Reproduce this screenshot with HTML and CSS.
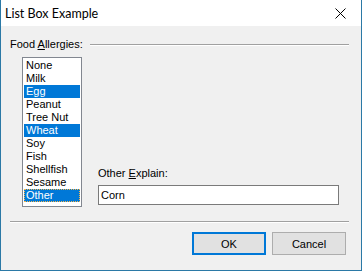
FILE: index.html
```html
<!DOCTYPE html>
<html>
<head>
<meta charset="utf-8">
<link rel="stylesheet" href="styles.css">
</head>
<body>
<div class="window">
  <div class="titlebar">
    <span class="title">List Box Example</span>
    <svg class="close" width="11" height="11" viewBox="0 0 11 11"><path d="M0.5 0.5 L10.5 10.5 M10.5 0.5 L0.5 10.5" stroke="#000" stroke-width="1" fill="none"/></svg>
  </div>
  <div class="content">
    <div class="group-head">
      <span class="label">Food <u>A</u>llergies:</span>
      <div class="etch"></div>
    </div>
    <div class="group-body">
      <ul class="listbox">
        <li>None</li>
        <li>Milk</li>
        <li class="sel">Egg</li>
        <li>Peanut</li>
        <li>Tree Nut</li>
        <li class="sel">Wheat</li>
        <li>Soy</li>
        <li>Fish</li>
        <li>Shellfish</li>
        <li>Sesame</li>
        <li class="sel focus">Other</li>
      </ul>
      <div class="other">
        <span class="label">Other <u>E</u>xplain:</span>
        <div class="textbox">Corn</div>
      </div>
    </div>
    <div class="etch sep"></div>
    <div class="buttons">
      <button class="btn default">OK</button>
      <button class="btn">Cancel</button>
    </div>
  </div>
</div>
</body>
</html>
```
FILE: styles.css
```css
* { box-sizing: border-box; }
html, body { margin: 0; padding: 0; background: #f0f0f0; }
.window {
  width: 362px;
  height: 271px;
  border: 1px solid #2b79a6;
  border-top: none;
  background: #f0f0f0;
  display: flex;
  flex-direction: column;
  font-family: "Liberation Sans", Arial, sans-serif;
  font-size: 11px;
  color: #000;
}
.titlebar {
  height: 26px;
  background: #fff;
  display: flex;
  align-items: center;
  padding-left: 4px;
  padding-right: 15px;
}
.title {
  font-family: Lato, "Noto Sans", sans-serif;
  font-size: 12.5px;
  flex: 1;
  padding-top: 1px;
}
.close { display: block; }
.content {
  flex: 1;
  display: flex;
  flex-direction: column;
  padding-top: 12px;
}
.label { line-height: 13px; white-space: nowrap; }
.group-head {
  display: flex;
  align-items: center;
  padding-left: 9px;
  padding-right: 12px;
}
.group-head .label { margin-right: 7px; }
.etch {
  flex: 1;
  height: 2px;
  border-top: 1px solid #a0a0a0;
  border-bottom: 1px solid #fff;
}
.group-body {
  display: flex;
  margin-top: 6px;
  padding-left: 21px;
}
.listbox {
  list-style: none;
  margin: 0;
  width: 60px;
  height: 150px;
  border: 1px solid #828790;
  background: #fff;
  padding: 1px;
}
.listbox li {
  height: 13px;
  line-height: 13px;
  padding-left: 2px;
  white-space: nowrap;
}
.listbox li.sel { background: #0078d7; color: #fff; }
.listbox li.focus { outline: 1px dotted #f7b64b; outline-offset: -1px; }
.other {
  display: flex;
  flex-direction: column;
  margin-left: 16px;
  padding-top: 110px;
  width: 241px;
}
.textbox {
  margin-top: 5px;
  height: 20px;
  border: 1px solid #7a7a7a;
  background: #fff;
  line-height: 18px;
  padding-left: 2px;
}
.sep {
  flex: none;
  margin: 14px 12px 0 9px;
}
.buttons {
  display: flex;
  justify-content: flex-end;
  gap: 6px;
  margin-top: 9px;
  padding-right: 15px;
}
.btn {
  width: 74px;
  height: 23px;
  font-family: "Liberation Sans", Arial, sans-serif;
  font-size: 11px;
  color: #000;
  background: #e1e1e1;
  border: 1px solid #adadad;
  padding: 0;
}
.btn.default { border: 2px solid #0078d7; }
```
